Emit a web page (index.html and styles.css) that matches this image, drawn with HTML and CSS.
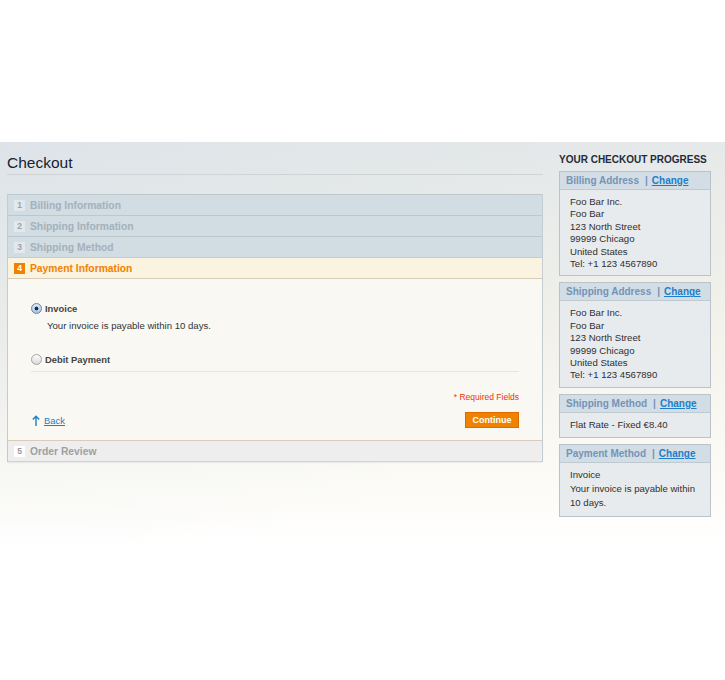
FILE: index.html
```html
<!DOCTYPE html>
<html lang="en">
<head>
    <meta charset="UTF-8">
    <meta name="viewport" content="width=device-width, initial-scale=1.0">
    <title>Checkout</title>
    <link rel="stylesheet" href="styles.css">
</head>
<body>
    <div class="header"></div>
    <div class="wrapper">
        <div class="col-main">
            <h1 class="page-title">Checkout</h1>
            <ol class="opc">
                <li class="section">
                    <div class="step-title"><span class="number">1</span><h2>Billing Information</h2></div>
                </li>
                <li class="section">
                    <div class="step-title"><span class="number">2</span><h2>Shipping Information</h2></div>
                </li>
                <li class="section">
                    <div class="step-title"><span class="number">3</span><h2>Shipping Method</h2></div>
                </li>
                <li class="section active">
                    <div class="step-title"><span class="number">4</span><h2>Payment Information</h2></div>
                    <div class="step">
                        <dl class="methods">
                            <dt><input type="radio" name="payment" id="p_invoice" checked><label for="p_invoice">Invoice</label></dt>
                            <dd>Your invoice is payable within 10 days.</dd>
                            <dt class="next"><input type="radio" name="payment" id="p_debit"><label for="p_debit">Debit Payment</label></dt>
                        </dl>
                        <p class="required">* Required Fields</p>
                        <div class="buttons-set">
                            <a href="#" class="back-link">
                                <svg width="8" height="11" viewBox="0 0 8 11"><path d="M4 1.5V11M0.8 4.6L4 1.2L7.2 4.6" fill="none" stroke="#1e7ec8" stroke-width="1.4"/></svg>
                                <span>Back</span>
                            </a>
                            <button type="button">Continue</button>
                        </div>
                    </div>
                </li>
                <li class="section last">
                    <div class="step-title"><span class="number">5</span><h2>Order Review</h2></div>
                </li>
            </ol>
        </div>

        <div class="col-right">
            <h3 class="progress-title">YOUR CHECKOUT PROGRESS</h3>
            <div class="box">
                <div class="box-title">Billing Address<span class="sep">|</span><a href="#">Change</a></div>
                <div class="box-content">
                    <address>Foo Bar Inc.<br>Foo Bar<br>123 North Street<br>99999 Chicago<br>United States<br>Tel: +1 123 4567890</address>
                </div>
            </div>
            <div class="box">
                <div class="box-title">Shipping Address<span class="sep">|</span><a href="#">Change</a></div>
                <div class="box-content">
                    <address>Foo Bar Inc.<br>Foo Bar<br>123 North Street<br>99999 Chicago<br>United States<br>Tel: +1 123 4567890</address>
                </div>
            </div>
            <div class="box">
                <div class="box-title">Shipping Method<span class="sep">|</span><a href="#">Change</a></div>
                <div class="box-content short">
                    <p>Flat Rate - Fixed €8.40</p>
                </div>
            </div>
            <div class="box">
                <div class="box-title">Payment Method<span class="sep">|</span><a href="#">Change</a></div>
                <div class="box-content short">
                    <p>Invoice</p>
                    <p>Your invoice is payable within 10 days.</p>
                </div>
            </div>
        </div>
    </div>
</body>
</html>
```

FILE: styles.css
```css
body {
    margin: 0;
    background-color: #fff;
    font-family: 'Liberation Sans', Arial, sans-serif;
    color: #2f2f2f;
}
.header {
    height: 142px;
}
.wrapper {
    display: flex;
    gap: 16px;
    padding: 12px 14px 0 7px;
    min-height: 538px;
    box-sizing: border-box;
    background:
        radial-gradient(ellipse at 0 0, rgba(214, 223, 232, 0.55), rgba(214, 223, 232, 0) 70%),
        linear-gradient(to bottom, #e6e9e9 0, #eceeea 90px, #f3f2eb 190px, #f9f8f2 290px, #fdfcf9 360px, #fff 400px);
    background-size: 725px 420px, 100% 100%;
    background-repeat: no-repeat;
}
.col-main {
    width: 536px;
}
.col-right {
    width: 152px;
}
.page-title {
    margin: 0;
    padding-bottom: 2px;
    border-bottom: 1px solid #cfd3d5;
    font-size: 15.5px;
    line-height: 18px;
    font-weight: normal;
    color: #152234;
}
.opc {
    list-style: none;
    margin: 19px 0 0;
    padding: 0;
    border-left: 1px solid #c3ccd2;
    border-right: 1px solid #c3ccd2;
}
.step-title {
    display: flex;
    align-items: center;
    height: 20px;
    border-top: 1px solid #bcc7ce;
    background-color: #d1dce3;
}
.step-title .number {
    width: 11px;
    height: 11px;
    margin: 0 5px 0 6px;
    background-color: #e2e8ec;
    color: #97a4ad;
    font-size: 8.5px;
    font-weight: bold;
    line-height: 11px;
    text-align: center;
}
.step-title h2 {
    margin: 0;
    font-size: 10.3px;
    font-weight: bold;
    color: #a4b1ba;
}
.section.active .step-title {
    background-color: #faf3df;
    border-top-color: #d5c9b5;
}
.section.active .number {
    background-color: #f18200;
    color: #fff;
}
.section.active h2 {
    color: #f18200;
}
.step {
    border-top: 1px solid #d9ccb7;
    background-color: #faf8f2;
    padding: 22px 23px 12px 23px;
}
.methods {
    margin: 0;
    padding-bottom: 5px;
    border-bottom: 1px solid #e8e5dc;
}
.methods dt {
    display: flex;
    align-items: center;
    height: 14px;
}
.methods dt.next {
    margin-top: 19px;
}
.methods label {
    font-size: 9.4px;
    font-weight: bold;
    color: #444;
}
.methods dd {
    margin: 4px 0 0 16px;
    font-size: 9.6px;
    line-height: 14px;
    color: #333;
}
input[type="radio"] {
    appearance: none;
    -webkit-appearance: none;
    width: 11px;
    height: 11px;
    margin: 0 3px 0 0;
    border: 1px solid #a4a4a4;
    border-radius: 50%;
    background: linear-gradient(#fdfdfd, #d9d9d9);
    box-sizing: border-box;
}
input[type="radio"]:checked {
    border-color: #6c83a6;
    background: radial-gradient(circle, #1d2940 0, #1d2940 1.6px, transparent 2.2px), linear-gradient(#dbe7f7, #a9c3e6);
}
.required {
    margin: 19px 0 0;
    text-align: right;
    font-size: 8.5px;
    line-height: 12px;
    color: #eb340a;
}
.buttons-set {
    display: flex;
    justify-content: space-between;
    align-items: center;
    margin-top: 9px;
}
.back-link {
    display: flex;
    align-items: center;
    gap: 4px;
    margin-left: 1px;
    color: #1e7ec8;
    font-size: 9.4px;
}
.back-link span {
    text-decoration: underline;
}
button {
    height: 16px;
    padding: 0 6.5px;
    background-color: #f18200;
    border: 1px solid #de6a00;
    color: #fff;
    font-family: 'Liberation Sans', Arial, sans-serif;
    font-size: 9px;
    font-weight: bold;
    cursor: pointer;
}
.section.last .step-title {
    border-top-color: #d8cbb8;
    border-bottom: 1px solid #d2d2d2;
    background-color: #eeeeee;
    box-shadow: 0 1px 1px rgba(0, 0, 0, 0.05);
}
.section.last .number {
    background-color: #fff;
    color: #9a9a9a;
}
.section.last h2 {
    color: #a0a0a0;
}
.progress-title {
    margin: 0 0 5px;
    font-size: 10px;
    line-height: 12px;
    font-weight: bold;
    color: #1f2b3b;
}
.box {
    margin-bottom: 6px;
    border: 1px solid #b9c3cb;
    background-color: #e8ebee;
}
.box-title {
    height: 17px;
    padding: 0 6px;
    border-bottom: 1px solid #bfc9d0;
    background-color: #d3dde5;
    font-size: 10px;
    line-height: 17px;
    font-weight: bold;
    color: #7394b7;
}
.box-title .sep {
    margin: 0 4px 0 6px;
}
.box-title a {
    color: #1e7ec8;
    text-decoration: underline;
}
.box-content {
    padding: 6px 10px;
    font-size: 9.6px;
    color: #2f2f2f;
}
.box-content.short {
    padding: 5px 10px 5.5px;
}
.box-content address {
    font-style: normal;
    line-height: 12.4px;
    margin-bottom: -1px;
}
.box-content p {
    margin: 0;
    line-height: 14px;
}
```
